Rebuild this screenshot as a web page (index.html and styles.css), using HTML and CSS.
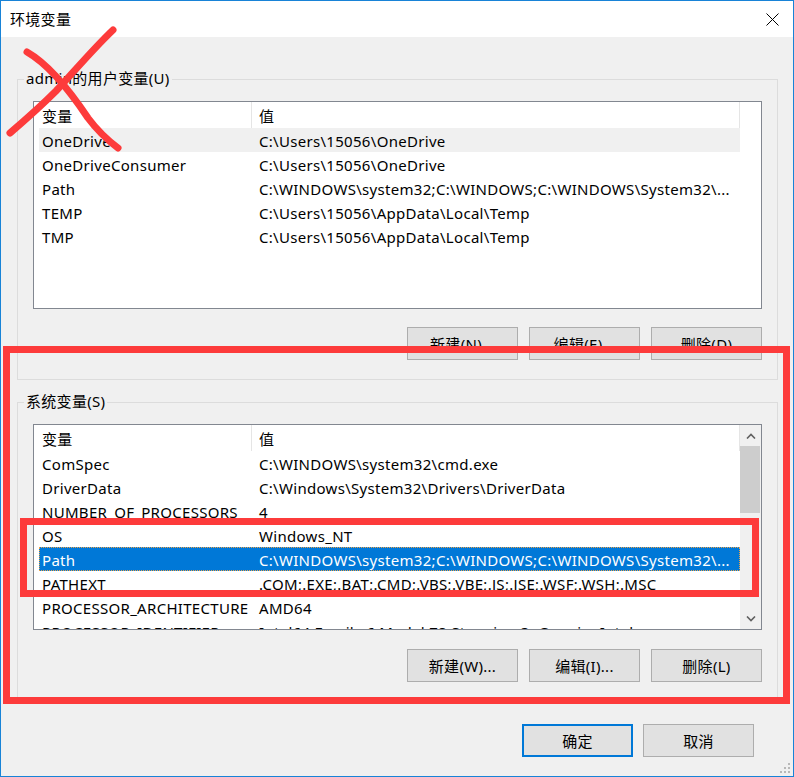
FILE: index.html
```html
<!DOCTYPE html>
<html lang="zh-CN">
<head>
<meta charset="utf-8">
<title>环境变量</title>
<link rel="stylesheet" href="styles.css">
</head>
<body>
<div class="window">
  <div class="titlebar">
    <span class="title">环境变量</span>
    <svg class="close" viewBox="0 0 13 13" width="13" height="13"><path d="M0.5 0.5 L12.5 12.5 M12.5 0.5 L0.5 12.5" stroke="#000" stroke-width="1" fill="none"/></svg>
  </div>
  <div class="content">
    <div class="group">
      <div class="legend">admin的用户变量(U)</div>
      <div class="listbox lb1">
        <div class="table">
          <div class="row head"><div class="c1">变量</div><div class="c2">值</div></div>
          <div class="row hot"><div class="c1">OneDrive</div><div class="c2">C:\Users\15056\OneDrive</div></div>
          <div class="row"><div class="c1">OneDriveConsumer</div><div class="c2">C:\Users\15056\OneDrive</div></div>
          <div class="row"><div class="c1">Path</div><div class="c2">C:\WINDOWS\system32;C:\WINDOWS;C:\WINDOWS\System32\...</div></div>
          <div class="row"><div class="c1">TEMP</div><div class="c2">C:\Users\15056\AppData\Local\Temp</div></div>
          <div class="row"><div class="c1">TMP</div><div class="c2">C:\Users\15056\AppData\Local\Temp</div></div>
        </div>
      </div>
      <div class="btns">
        <button>新建(N)...</button>
        <button>编辑(E)...</button>
        <button>删除(D)</button>
      </div>
    </div>
    <div class="group g2">
      <div class="legend">系统变量(S)</div>
      <div class="listbox lb2">
        <div class="table">
          <div class="row head"><div class="c1">变量</div><div class="c2">值</div></div>
          <div class="row"><div class="c1">ComSpec</div><div class="c2">C:\WINDOWS\system32\cmd.exe</div></div>
          <div class="row"><div class="c1">DriverData</div><div class="c2">C:\Windows\System32\Drivers\DriverData</div></div>
          <div class="row"><div class="c1">NUMBER_OF_PROCESSORS</div><div class="c2">4</div></div>
          <div class="row"><div class="c1">OS</div><div class="c2">Windows_NT</div></div>
          <div class="row sel"><div class="c1">Path</div><div class="c2">C:\WINDOWS\system32;C:\WINDOWS;C:\WINDOWS\System32\...</div></div>
          <div class="row"><div class="c1">PATHEXT</div><div class="c2">.COM;.EXE;.BAT;.CMD;.VBS;.VBE;.JS;.JSE;.WSF;.WSH;.MSC</div></div>
          <div class="row"><div class="c1">PROCESSOR_ARCHITECTURE</div><div class="c2">AMD64</div></div>
          <div class="row"><div class="c1">PROCESSOR_IDENTIFIER</div><div class="c2">Intel64 Family 6 Model 78 Stepping 3, GenuineIntel</div></div>
        </div>
        <div class="scroll">
          <div class="sb-btn"><svg viewBox="0 0 10 6" width="10" height="6"><path d="M1 5.5 L5 1.5 L9 5.5" stroke="#606060" stroke-width="1.6" fill="none"/></svg></div>
          <div class="thumb"></div>
          <div class="spacer"></div>
          <div class="sb-btn"><svg viewBox="0 0 10 6" width="10" height="6"><path d="M1 0.5 L5 4.5 L9 0.5" stroke="#606060" stroke-width="1.6" fill="none"/></svg></div>
        </div>
      </div>
      <div class="btns">
        <button>新建(W)...</button>
        <button>编辑(I)...</button>
        <button>删除(L)</button>
      </div>
    </div>
    <div class="footer">
      <button class="primary">确定</button>
      <button>取消</button>
    </div>
  </div>

  <div class="mark mark-big"></div>
  <div class="mark mark-small"></div>
  <svg class="cross" width="140" height="160" viewBox="0 0 140 160">
    <path d="M27 52 C48 64 68 88 88 118 C100 134 110 142 118 148" stroke="#fd3b3b" stroke-width="7" stroke-linecap="round" fill="none"/>
    <path d="M113 30 C92 50 72 74 56 91 C40 107 24 121 10 133" stroke="#fd3b3b" stroke-width="7" stroke-linecap="round" fill="none"/>
  </svg>
  <svg class="grip" width="13" height="13" viewBox="0 0 13 13">
    <rect x="9" y="1" width="2" height="2" fill="#b8b8b8"/>
    <rect x="5" y="5" width="2" height="2" fill="#b8b8b8"/>
    <rect x="9" y="5" width="2" height="2" fill="#b8b8b8"/>
    <rect x="1" y="9" width="2" height="2" fill="#b8b8b8"/>
    <rect x="5" y="9" width="2" height="2" fill="#b8b8b8"/>
    <rect x="9" y="9" width="2" height="2" fill="#b8b8b8"/>
  </svg>
</div>
</body>
</html>
```

FILE: styles.css
```css
* { box-sizing: border-box; }
html, body { margin: 0; padding: 0; }
body {
  font-family: "Noto Sans", "Noto Sans CJK SC", sans-serif;
  font-size: 15px;
  letter-spacing: 0.3px;
  color: #000;
  background: #f0f0f0;
}
.window {
  position: relative;
  width: 794px;
  height: 777px;
  border: 1px solid #1883d7;
  background: #f0f0f0;
  overflow: hidden;
}
.titlebar {
  height: 36px;
  background: #fff;
  display: flex;
  align-items: center;
  justify-content: space-between;
  padding: 0 14px 0 9px;
}
.title { line-height: 36px; }
.close { display: block; }

.content { padding: 42px 15px 0 16px; }

.group {
  border: 1px solid #dcdcdc;
  padding: 0 15px 19px;
}
.g2 { margin-top: 22px; }
.legend {
  width: max-content;
  margin: -12px 0 0 -9px;
  padding: 0 2px;
  line-height: 20px;
  background: #f0f0f0;
}
.listbox {
  margin-top: 13px;
  border: 1px solid #828790;
  background: #fff;
  overflow: hidden;
  display: flex;
}
.lb1 { height: 208px; }
.lb2 { height: 206px; }
.table {
  padding-left: 5px;
  width: 706px;
  flex: none;
}
.row {
  display: flex;
  height: 24px;
  line-height: 24px;
  white-space: nowrap;
}
.row.head { height: 26px; line-height: 26px; }
.c1 { width: 213px; padding-left: 3px; padding-top: 1px; overflow: hidden; flex: none; }
.c2 { width: 488px; padding-left: 7px; padding-top: 1px; overflow: hidden; flex: none; }
.head .c1, .head .c2 { border-right: 1px solid #e5e5e5; }
.hot { background: #f0f0f0; }
.sel {
  background: #0078d7;
  color: #fff;
  outline: 1px dotted #e9a24a;
  outline-offset: -1px;
}
.scroll {
  width: 21px;
  flex: none;
  background: #f0f0f0;
  display: flex;
  flex-direction: column;
}
.sb-btn {
  height: 21px;
  display: flex;
  align-items: center;
  justify-content: center;
}
.thumb {
  height: 67px;
  background: #cdcdcd;
  margin-right: 1px;
}
.spacer { flex: 1; }

.btns {
  display: flex;
  justify-content: flex-end;
  gap: 11px;
  margin-top: 18px;
}
.g2 .btns { margin-top: 19px; }
button {
  width: 111px;
  height: 33px;
  background: #e1e1e1;
  border: 1px solid #adadad;
  font: inherit;
  letter-spacing: inherit;
  color: #000;
  padding: 0;
  margin: 0;
}
.footer {
  display: flex;
  justify-content: flex-end;
  gap: 10px;
  margin-top: 22px;
  padding-right: 24px;
}
.primary { border: 2px solid #0078d7; }

.mark {
  position: absolute;
  border: 7px solid #fd3b3b;
}
.mark-big { left: 2px; top: 345px; width: 787px; height: 358px; }
.mark-small { left: 19px; top: 517px; width: 739px; height: 79px; }
.cross { position: absolute; left: -1px; top: -1px; }
.grip { position: absolute; right: 1px; bottom: 1px; }
```
